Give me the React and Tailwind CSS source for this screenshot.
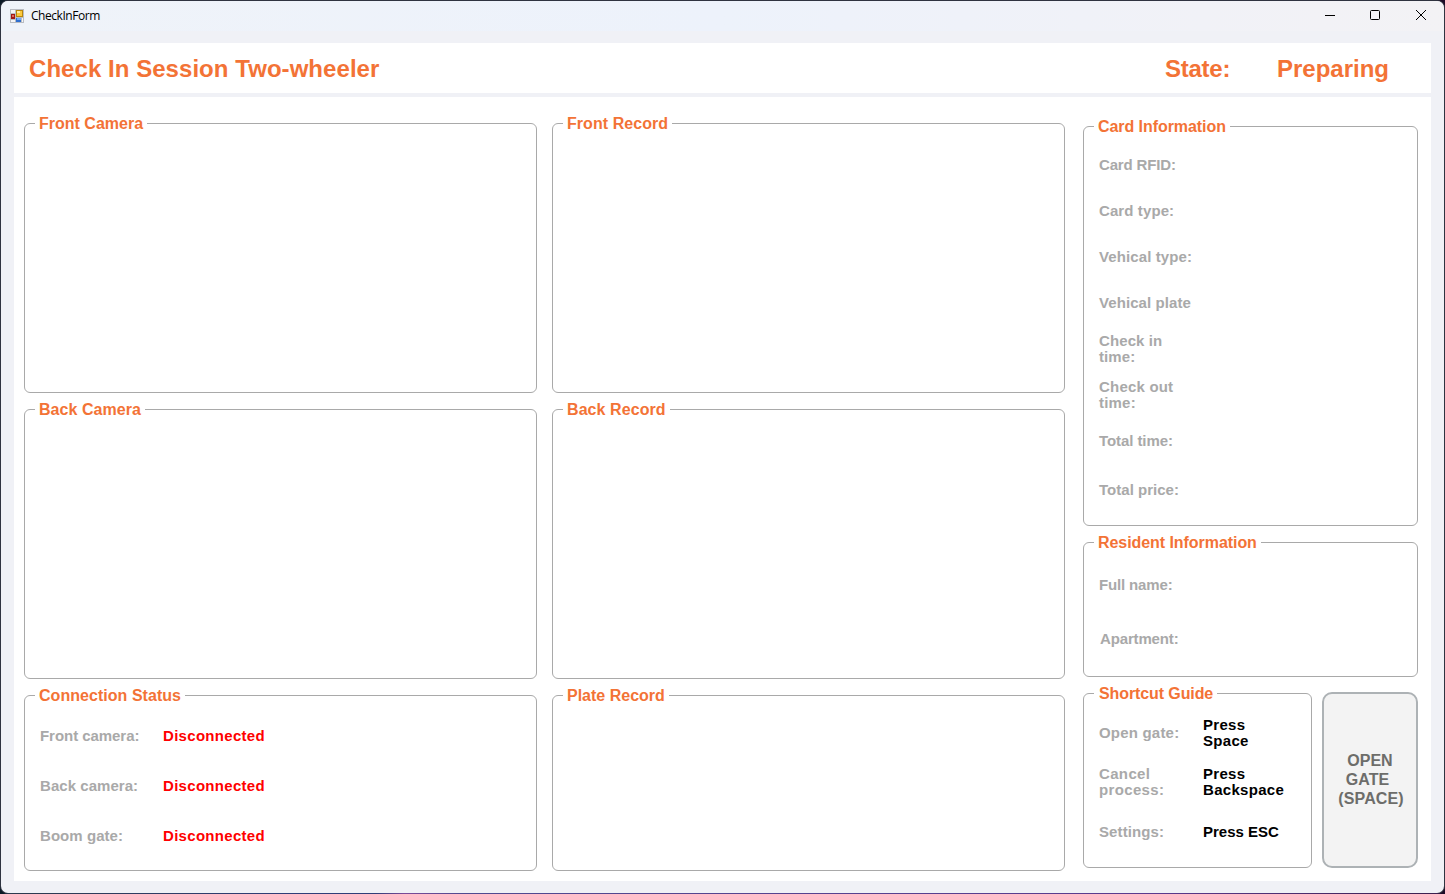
function Group({ title, className, legendClass = "px-[4px]", children }) {
  return (
    <fieldset className={`min-w-0 rounded-[6px] border border-[#a9a9a9] pl-[10px] ${className}`}>
      <legend className={`h-[19px] text-[16px] leading-[19px] font-bold whitespace-nowrap text-[#f37336] ${legendClass}`}>{title}</legend>
      <div className="flex flex-col pt-[6px]">{children}</div>
    </fieldset>
  );
}

function Label({ className = "", children }) {
  return (
    <div className={`text-[15px] leading-[16px] font-bold whitespace-pre-line ${className}`}>{children}</div>
  );
}

function AppIcon() {
  return (
    <svg width="14" height="14" viewBox="0 0 14 14" shapeRendering="crispEdges">
      <rect width="14" height="14" fill="#b9bcc2" />
      <rect x="1" y="1" width="4" height="3" fill="#f4f5f7" />
      <rect x="1" y="11" width="4" height="2" fill="#f4f5f7" />
      <rect x="12" y="9" width="1" height="4" fill="#f4f5f7" />
      <rect x="6" y="1" width="7" height="7" fill="#b8860b" />
      <rect x="7" y="2" width="5" height="5" fill="#fbc93d" />
      <rect x="7" y="2" width="3" height="2" fill="#ffe9a0" />
      <rect x="1" y="5" width="4" height="5" fill="#a11616" />
      <rect x="2" y="6" width="2" height="2" fill="#e06a5c" />
      <rect x="6" y="9" width="5" height="4" fill="#2f6fd0" />
      <rect x="7" y="9" width="4" height="2" fill="#73a9f5" />
    </svg>
  );
}

const cardRows = [
  { name: "Card RFID:", tracking: "tracking-[-0.15px]" },
  { name: "Card type:", tracking: "tracking-[0.1px]" },
  { name: "Vehical type:", tracking: "tracking-[0.1px]" },
  { name: "Vehical plate", tracking: "tracking-[0.08px]" },
  { name: "Check in\ntime:", tracking: "tracking-[0.1px]" },
  { name: "Check out\ntime:", tracking: "tracking-[0.2px]" },
  { name: "Total time:", tracking: "tracking-[-0.08px]" },
];
const connections = [
  { name: "Front camera:", tracking: "tracking-[-0.05px]" },
  { name: "Back camera:", tracking: "tracking-[0.05px]" },
  { name: "Boom gate:", tracking: "tracking-[0.05px]" },
];

export default function App() {
  return (
    <div className="h-[894px] w-[1445px] bg-gradient-to-r from-[#0b1a26] to-[#1c0a26] font-['Liberation_Sans',sans-serif]">
      <div className="flex h-full w-full overflow-hidden rounded-[8px] bg-[#2f3340] bg-[linear-gradient(to_right,#2c3a4c_0%,#2f3d78_20%,#2f3d78_26%,#7b4a98_28%,#4f4a90_32%,#5a3a8e_80%,#3a1f4c_100%)] bg-[length:100%_1px] bg-bottom bg-no-repeat p-px">
        <div className="flex h-full w-full flex-col overflow-hidden rounded-[7px] bg-[#f0f1f6]">
          <header className="flex h-[30px] shrink-0 items-center bg-gradient-to-r from-[#eff3f9] via-[#edf2fb] via-50% to-[#f3f2f5] pl-[9px]">
            <AppIcon />
            <span className="ml-[7px] font-['Open_Sans',sans-serif] text-[12px] leading-[16px] tracking-[-0.45px] text-black">CheckInForm</span>
            <svg className="mr-[-1px] ml-auto" width="134" height="30" viewBox="0 0 134 30" fill="none" stroke="#000">
              <path d="M14 14.5h10" shapeRendering="crispEdges" />
              <rect x="59.5" y="9.5" width="9" height="9" rx="1" />
              <path d="M105 9l10 10M115 9l-10 10" />
            </svg>
          </header>

          <div className="mt-[12px] ml-[13px] flex h-[50px] w-[1417px] shrink-0 items-center bg-white pt-[2px] pl-[15px] text-[24px] font-bold text-[#f37336]">
            <h1 className="w-[1136px] tracking-[0.05px]">Check In Session Two-wheeler</h1>
            <span className="w-[112px] tracking-[-0.25px]">State:</span>
            <span>Preparing</span>
          </div>

          <main className="mt-[4px] ml-[13px] flex h-[784px] w-[1417px] shrink-0 bg-white pt-[17px] pl-[10px]">
            <section className="flex w-[513px] flex-col gap-[7px]">
              <Group title="Front Camera" className="h-[279px]" />
              <Group title="Back Camera" legendClass="pr-[4px] pl-[4px] tracking-[0.06px]" className="h-[279px]" />
              <Group title="Connection Status" legendClass="pr-[4px] pl-[4px] tracking-[0.04px]" className="h-[185px]">
                {connections.map(({ name, tracking }) => (
                  <div key={name} className="flex h-[50px] items-center pl-[5px]">
                    <Label className={`w-[123px] text-[#a9a9a9] ${tracking}`}>{name}</Label>
                    <Label className="tracking-[0.3px] text-[#ff0000]">Disconnected</Label>
                  </div>
                ))}
              </Group>
            </section>

            <section className="ml-[15px] flex w-[513px] flex-col gap-[7px]">
              <Group title="Front Record" legendClass="pr-[4px] pl-[4px] tracking-[0.06px]" className="h-[279px]" />
              <Group title="Back Record" legendClass="pr-[4px] pl-[4px] tracking-[0.08px]" className="h-[279px]" />
              <Group title="Plate Record" className="h-[185px]" />
            </section>

            <section className="ml-[18px] flex w-[335px] flex-col gap-[7px] pt-[3px]">
              <Group title="Card Information" legendClass="px-[4px] tracking-[-0.06px]" className="h-[409px]">
                {cardRows.map(({ name, tracking }) => (
                  <div key={name} className="flex h-[46px] items-center pl-[5px]">
                    <Label className={`text-[#a9a9a9] ${tracking}`}>{name}</Label>
                  </div>
                ))}
                <div className="flex h-[52px] items-center pl-[5px]">
                  <Label className="tracking-[0.02px] text-[#a9a9a9]">Total price:</Label>
                </div>
              </Group>
              <Group title="Resident Information" legendClass="px-[4px] tracking-[-0.06px]" className="h-[144px]">
                <div className="flex h-[54px] items-center pl-[5px]">
                  <Label className="tracking-[-0.15px] text-[#a9a9a9]">Full name:</Label>
                </div>
                <div className="flex h-[54px] items-center pl-[6px]">
                  <Label className="tracking-[-0.15px] text-[#a9a9a9]">Apartment:</Label>
                </div>
              </Group>
              <div className="flex">
                <Group title="Shortcut Guide" legendClass="pr-[4px] pl-[5px] tracking-[-0.1px]" className="h-[184px] w-[229px]">
                  <div className="flex h-[48px] items-center pl-[5px]">
                    <Label className="w-[104px] tracking-[0.2px] text-[#a9a9a9]">Open gate:</Label>
                    <Label className="tracking-[0.3px] text-black">{"Press\nSpace"}</Label>
                  </div>
                  <div className="flex h-[50px] items-center pl-[5px]">
                    <Label className="w-[104px] tracking-[0.35px] text-[#a9a9a9]">{"Cancel\nprocess:"}</Label>
                    <Label className="tracking-[0.3px] text-black">{"Press\nBackspace"}</Label>
                  </div>
                  <div className="flex h-[50px] items-center pl-[5px]">
                    <Label className="w-[104px] tracking-[0.1px] text-[#a9a9a9]">Settings:</Label>
                    <Label className="text-black">Press ESC</Label>
                  </div>
                </Group>
                <button className="mt-[8px] ml-[10px] flex h-[176px] w-[96px] flex-col items-center justify-center rounded-[10px] border-2 border-[#adb2b5] bg-[#f3f3f3] pb-[2px] text-[16px] leading-[19px] font-bold text-[#6d6d6a]">
                  <span>OPEN</span>
                  <span className="pr-[5px]">GATE</span>
                  <span className="pl-[2px] tracking-[0.1px]">(SPACE)</span>
                </button>
              </div>
            </section>
          </main>
        </div>
      </div>
    </div>
  );
}
